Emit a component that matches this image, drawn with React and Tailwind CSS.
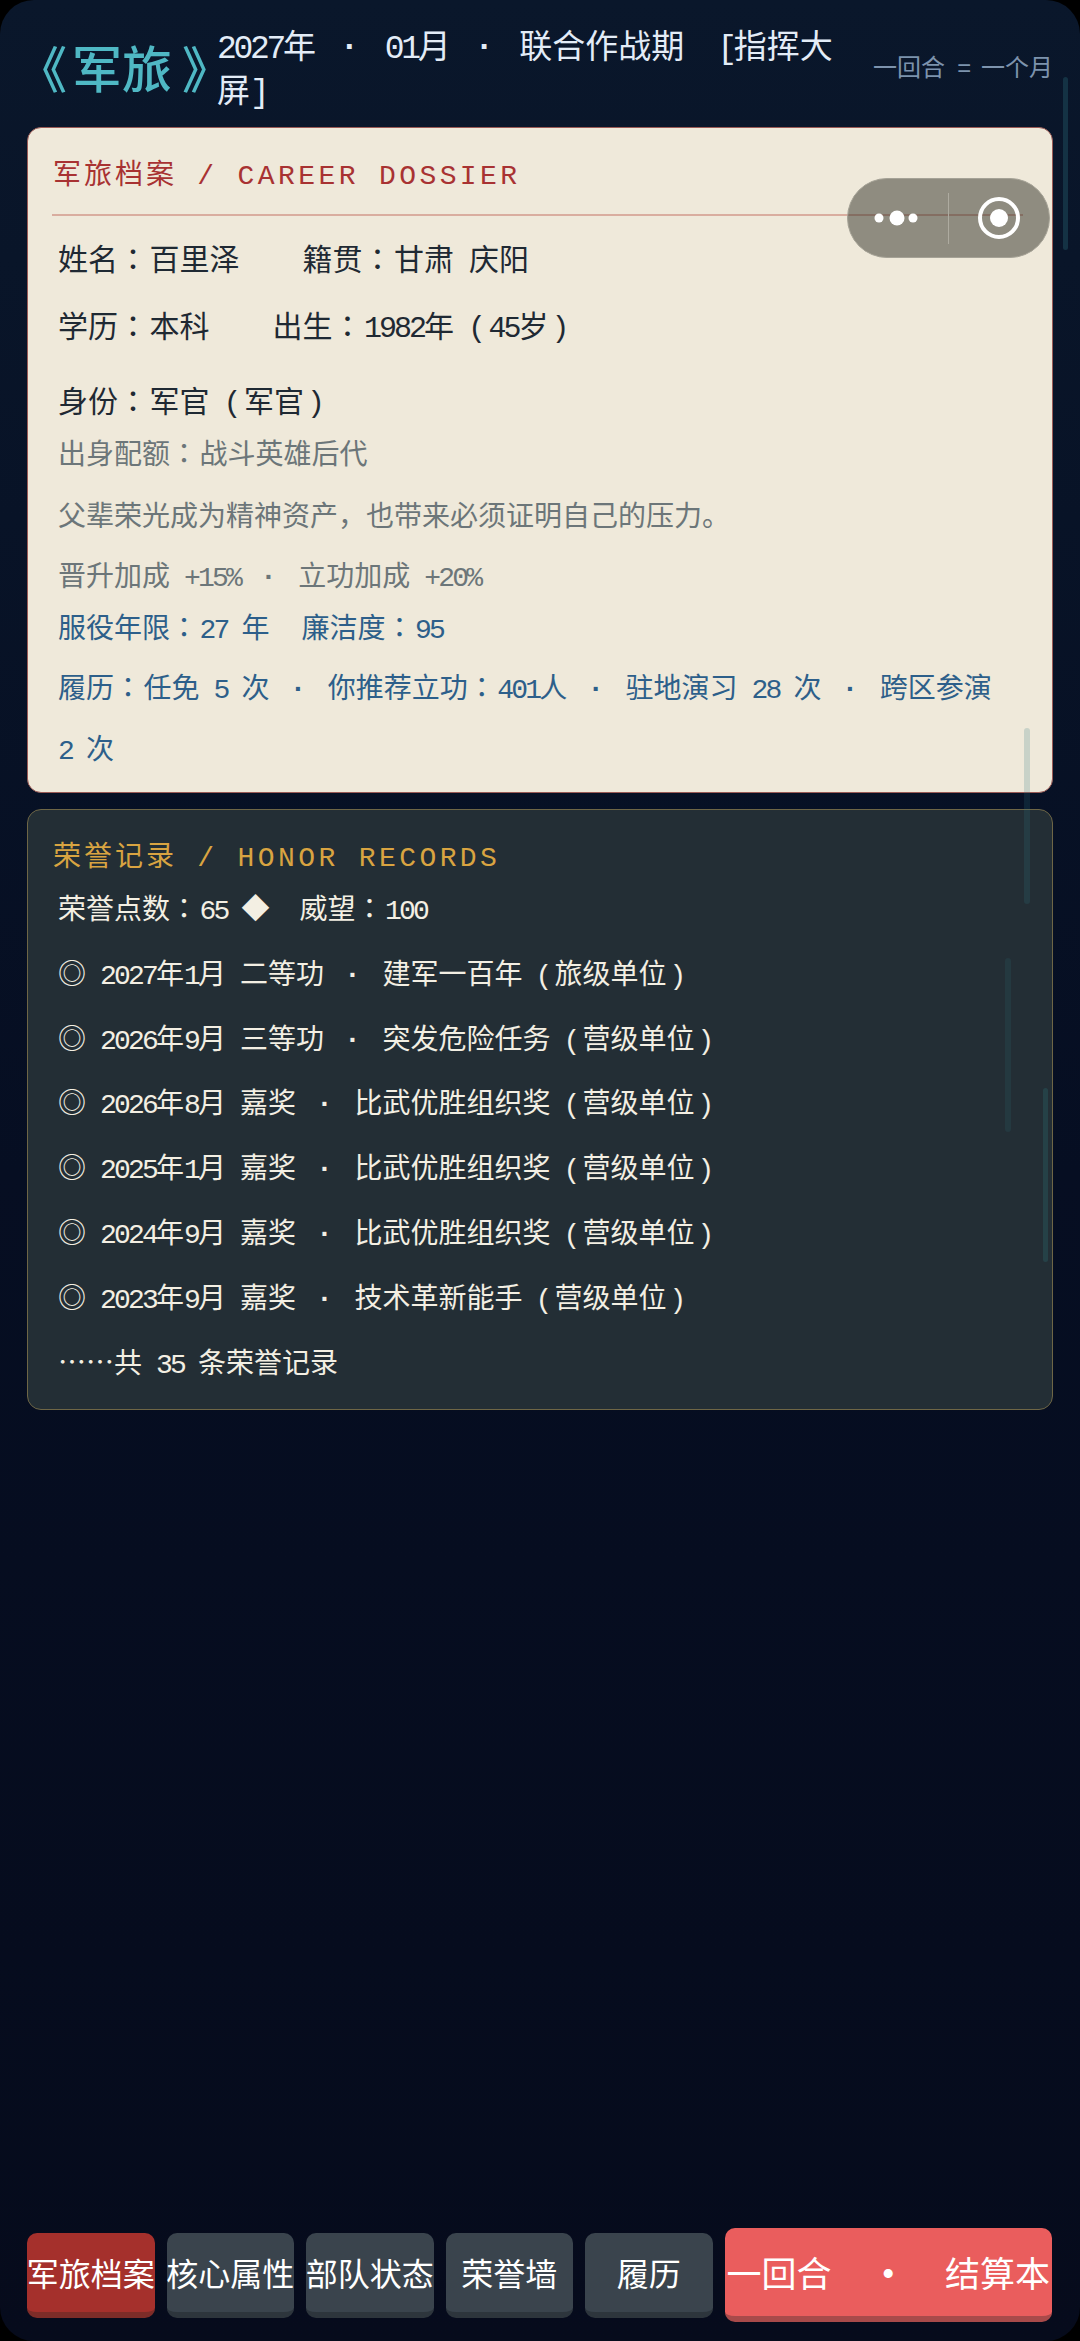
import React from 'react';

// the reference font has half-width latin (0.5em) and a centred full-width colon
function T({ children }) {
  const parts = String(children).split(/([\x20-\x7e]+|：|·|（|）)/).filter(Boolean);
  return parts.map((p, i) => {
    if (p === '：') return <span key={i} className="leading-none pr-[0.05em] font-['Noto_Sans_CJK_TC',sans-serif]">：</span>;
    if (p === '·') return <span key={i} className="inline-block leading-none w-[1.08em] text-center font-['Liberation_Sans',sans-serif] font-bold">·</span>;
    if (p === '（') return <span key={i} className="inline-block leading-none w-[1.15em] text-right pr-[0.08em] font-['Liberation_Mono',monospace]">(</span>;
    if (p === '）') return <span key={i} className="inline-block leading-none w-[0.7em] text-right font-['Liberation_Mono',monospace]">)</span>;
    if (/^[\x20-\x7e]+$/.test(p)) {
      return <span key={i} className="leading-none font-['Liberation_Mono',monospace] tracking-[-0.1em] whitespace-pre-wrap">{p}</span>;
    }
    return <span key={i}>{p}</span>;
  });
}

const HONORS = [
  '2027年1月 二等功 · 建军一百年（旅级单位）',
  '2026年9月 三等功 · 突发危险任务（营级单位）',
  '2026年8月 嘉奖 · 比武优胜组织奖（营级单位）',
  '2025年1月 嘉奖 · 比武优胜组织奖（营级单位）',
  '2024年9月 嘉奖 · 比武优胜组织奖（营级单位）',
  '2023年9月 嘉奖 · 技术革新能手（营级单位）',
];

const TABS = ['军旅档案', '核心属性', '部队状态', '荣誉墙', '履历'];

function SectionTitle({ cn, en, color }) {
  return (
    <div className={`text-[28px] leading-[40px] tracking-[3px] pl-px ${color}`}>
      {cn}<span className="leading-none tracking-[3.4px] whitespace-pre font-['Liberation_Mono',monospace]">{' / ' + en}</span>
    </div>
  );
}

function Capsule() {
  return (
    <div className="absolute left-[847px] top-[178px] w-[203px] h-[80px] rounded-[40px] bg-[#2f2f26]/50 border border-[#a5a296] flex items-center">
      <svg width="201" height="78" viewBox="0 0 201 78" fill="none">
        <circle cx="31" cy="39" r="4.5" fill="#fff" />
        <circle cx="49" cy="39" r="7.5" fill="#fff" />
        <circle cx="65" cy="39" r="4.5" fill="#fff" />
        <rect x="100" y="14" width="1" height="51" fill="#aeaba0" />
        <circle cx="151" cy="39" r="19" stroke="#fff" strokeWidth="4" />
        <circle cx="151" cy="39" r="9" fill="#fff" />
      </svg>
    </div>
  );
}

export default function App() {
  return (
    <div className="relative w-full h-[2341px] bg-black overflow-hidden font-['Noto_Sans_CJK_SC',sans-serif]">
      <div className="h-full flex flex-col rounded-[34px] bg-gradient-to-b from-[#0a172b] via-[#060e22] to-[#060b1c]">
        <header className="h-[127px] shrink-0 flex items-center pt-[5px] pl-[17px] pr-[27px]">
          <div className="flex shrink-0 text-[50px] leading-[60px] font-medium text-[#4fb8c4] whitespace-nowrap">
            <span className="w-[55px]">《</span>
            <span>军旅</span>
            <span className="pl-[10px] tracking-[-15px]">》</span>
          </div>
          <div className="flex-1 min-w-0 text-[33px] leading-[44px] text-[#e3ecf7] pr-[10px]">
            <T>2027年 · 01月 · 联合作战期  [指挥大屏]</T>
          </div>
          <div className="text-[24px] text-[#7d93ad] shrink-0 whitespace-nowrap"><T>一回合 = 一个月</T></div>
        </header>

        <main className="mx-[27px] flex flex-col gap-[16px]">
          <section className="rounded-[14px] bg-[#efe9da] border border-[#9a5a55] pt-[24px] px-[24px] pb-[14px]">
            <SectionTitle cn="军旅档案" en="CAREER DOSSIER" color="text-[#a83232]" />
            <div className="mt-[22px] mr-[5px] h-[2px] bg-[#d9ad9f]" />
            <div className="px-[6px] text-[#1f2933]">
              <div className="mt-[19px] text-[30px] leading-[44px]">
                <T>姓名：百里泽</T><span className="ml-[63px]"><T>籍贯：甘肃 庆阳</T></span>
              </div>
              <div className="mt-[23px] text-[30px] leading-[44px]">
                <T>学历：本科</T><span className="ml-[63px]"><T>出生：1982年（45岁）</T></span>
              </div>
              <div className="mt-[31px] text-[30px] leading-[44px]"><T>身份：军官（军官）</T></div>
              <div className="mt-[11px] text-[28px] leading-[40px] text-[#6c7679]"><T>出身配额：战斗英雄后代</T></div>
              <div className="mt-[22px] text-[28px] leading-[40px] text-[#6c7679]">父辈荣光成为精神资产，也带来必须证明自己的压力。</div>
              <div className="mt-[20px] text-[28px] leading-[40px] text-[#6c7679]"><T>晋升加成 +15% · 立功加成 +20%</T></div>
              <div className="mt-[12px] text-[28px] leading-[40px] text-[#2d5f8a]">
                <T>服役年限：27 年</T><span className="ml-[32px]"><T>廉洁度：95</T></span>
              </div>
              <div className="mt-[10px] text-[28px] leading-[61px] text-[#2d5f8a]">
                <T>履历：任免 5 次 · 你推荐立功：401人 · 驻地演习 28 次 · 跨区参演</T>
                <br />
                <T>2 次</T>
              </div>
            </div>
          </section>

          <section className="rounded-[14px] bg-[#232e35] border border-[#6e6646] pt-[24px] px-[24px] pb-[28px]">
            <SectionTitle cn="荣誉记录" en="HONOR RECORDS" color="text-[#d9a441]" />
            <div className="px-[6px] text-[28px] leading-[40px] text-[#f3efe3]">
              <div className="mt-[13px]"><T>荣誉点数：65 ◆</T><span className="ml-[30px]"><T>威望：100</T></span></div>
              {HONORS.map(h => (
                <div key={h} className="mt-[24.8px] whitespace-nowrap"><T>{'◎ ' + h}</T></div>
              ))}
              <div className="mt-[24.8px]"><T>……共 35 条荣誉记录</T></div>
            </div>
          </section>
        </main>

        <div className="flex-1" />

        <footer className="flex items-center gap-[12px] pl-[27px] pr-[28px] pb-[19px]">
          {TABS.map((t, i) => (
            <button
              key={t}
              className={`w-[127.5px] h-[85px] shrink-0 rounded-[10px] border-b-[6px] flex items-center justify-center text-white text-[32px] whitespace-nowrap ${i === 0 ? 'bg-[#a5302c] border-[#7d2c28]' : 'bg-[#3a444d] border-[#2d353c]'}`}
            >
              {t}
            </button>
          ))}
          <button className="flex-1 h-[94px] rounded-[10px] border-b-[6px] bg-[#ea5d5d] border-[#a84a4a] flex items-center justify-between px-[2px] text-white text-[35px] whitespace-nowrap">
            <span>一回合</span>
            <span className="font-bold">·</span>
            <span>结算本</span>
          </button>
        </footer>
      </div>

      <Capsule />

      {/* faint overlay scroll indicators */}
      <div className="absolute left-[1063px] top-[77px] w-[5px] h-[173px] rounded-full bg-[#143244]" />
      <div className="absolute left-[1024px] top-[728px] w-[6px] h-[176px] rounded-full bg-[#2d7a80]/20" />
      <div className="absolute left-[1005px] top-[958px] w-[6px] h-[174px] rounded-full bg-[#2d7a80]/15" />
      <div className="absolute left-[1043px] top-[1088px] w-[5px] h-[174px] rounded-full bg-[#2d7a80]/25" />
    </div>
  );
}
